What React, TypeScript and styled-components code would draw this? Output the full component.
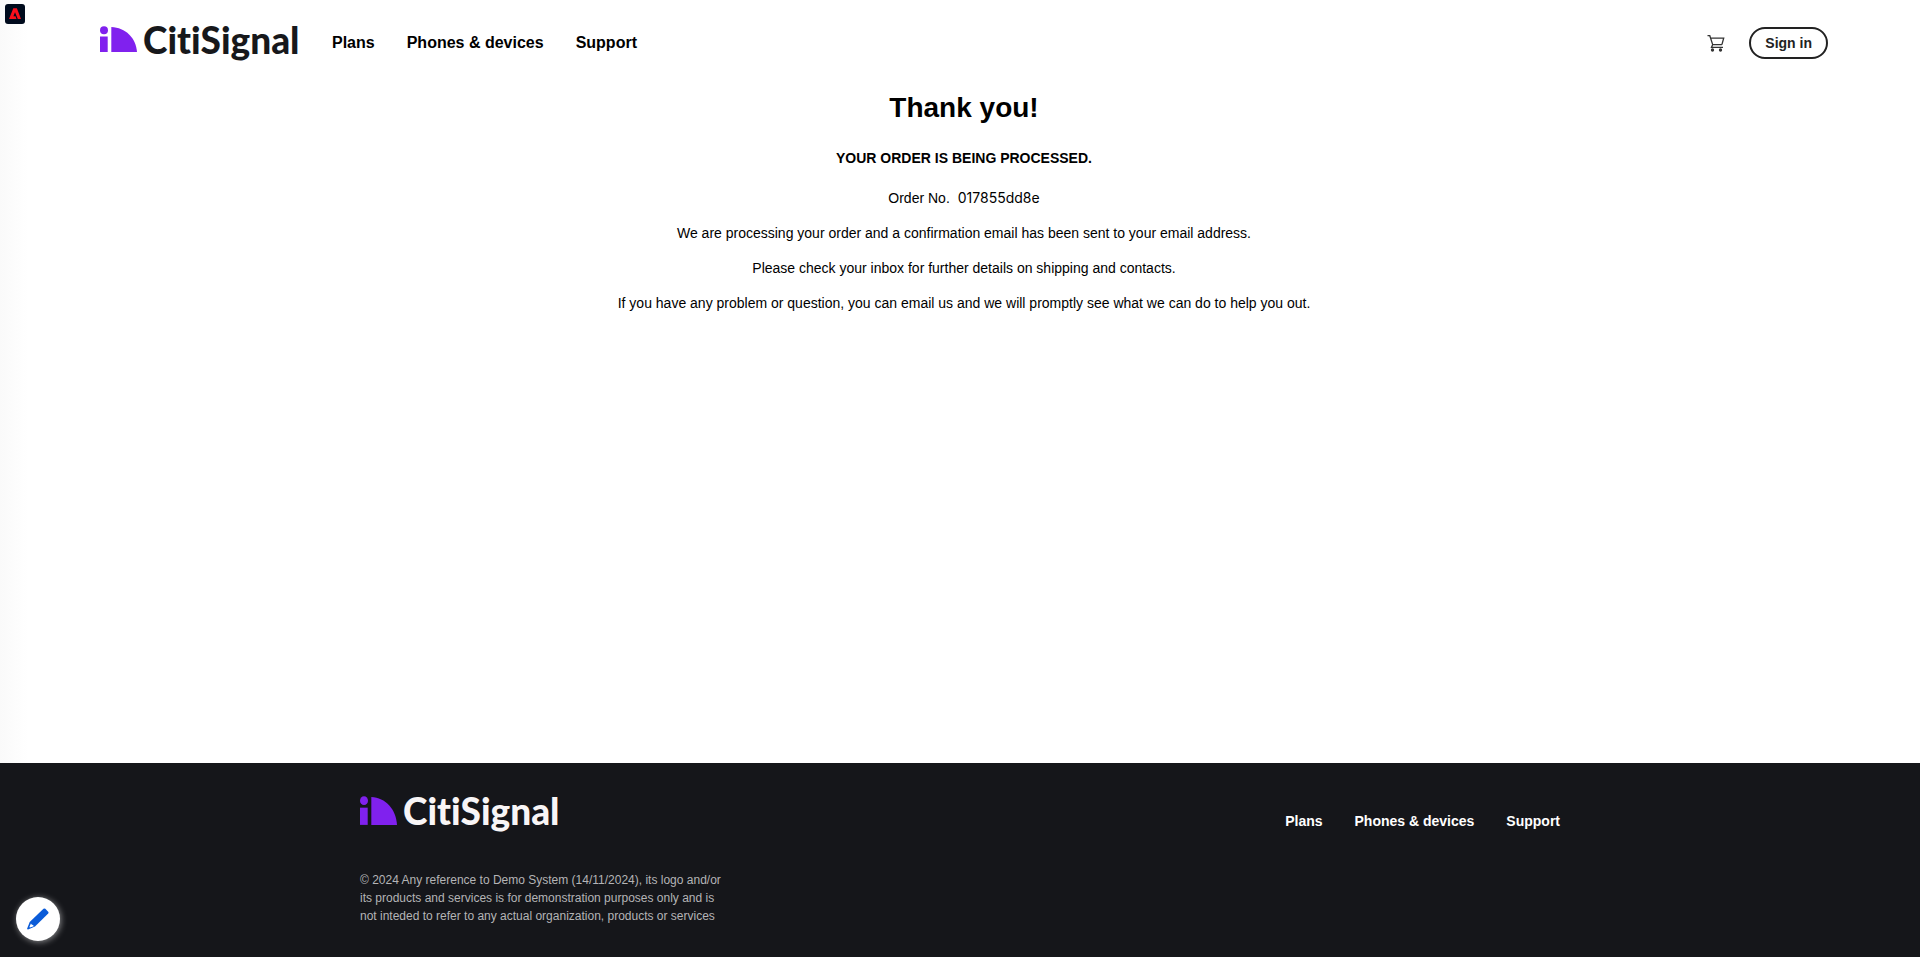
import React from "react";
import styled, { createGlobalStyle } from "styled-components";

const GlobalStyle = createGlobalStyle`
  *, *::before, *::after { box-sizing: border-box; }
  body {
    margin: 0;
    background: #fff;
    color: #000;
    font-family: "Liberation Sans", Arial, Helvetica, sans-serif;
  }
`;

const Page = styled.div`
  display: flex;
  flex-direction: column;
  min-height: 100vh;
  background: linear-gradient(to right, #fafafa, #fff 28px);
`;

const Header = styled.header`
  display: flex;
  align-items: center;
  justify-content: space-between;
  padding: 20px 92px 20px 100px;
`;

const HeaderGroup = styled.div<{ $gap: number }>`
  display: flex;
  align-items: center;
  gap: ${({ $gap }) => $gap}px;
`;

const LogoLink = styled.a<{ $color: string }>`
  display: flex;
  align-items: flex-start;
  gap: 6px;
  width: 200px;
  height: 46px;
  color: ${({ $color }) => $color};
  text-decoration: none;
`;

const LogoMark = styled.svg<{ $tall?: boolean }>`
  flex: none;
  width: 37px;
  height: ${({ $tall }) => ($tall ? 30 : 27)}px;
  margin-top: ${({ $tall }) => ($tall ? 5 : 6)}px;
`;

const LogoName = styled.span`
  font-family: Lato, "Open Sans", sans-serif;
  font-size: 37px;
  font-weight: 900;
  line-height: 40px;
  font-variant-ligatures: none;
`;

const NavList = styled.ul`
  display: flex;
  gap: 32px;
  margin: 0;
  padding: 0;
  list-style: none;
`;

const NavLink = styled.a<{ $size: number; $color: string }>`
  color: ${({ $color }) => $color};
  font-size: ${({ $size }) => $size}px;
  font-weight: 700;
  line-height: 24px;
  text-decoration: none;
`;

const CartButton = styled.button`
  display: flex;
  padding: 0;
  border: 0;
  background: none;
  color: #222;
  cursor: pointer;
`;

const SignInButton = styled.button`
  height: 32px;
  padding: 0 14px;
  border: 2px solid #222;
  border-radius: 16px;
  background: #fff;
  color: #222;
  font: 700 14px/20px "Liberation Sans", Arial, sans-serif;
  cursor: pointer;
`;

const Main = styled.main`
  flex: 1;
  padding: 4px 24px 40px 32px;
  text-align: center;
`;

const Title = styled.h1`
  margin: 0 0 22px;
  font-size: 28px;
  line-height: 36px;
`;

const Status = styled.h2`
  margin: 0 0 20px;
  font-size: 14px;
  line-height: 20px;
  text-transform: uppercase;
`;

const Paragraph = styled.p`
  margin: 0 0 15px;
  font-size: 14px;
  line-height: 20px;
`;

const OrderNumber = styled.span`
  margin-left: 8px;
  font-family: Inter, "Open Sans", sans-serif;
`;

const Footer = styled.footer`
  background: #15161a;
`;

const FooterInner = styled.div`
  display: flex;
  justify-content: space-between;
  max-width: 1200px;
  margin: 0 auto;
  padding: 28px 0 32px;
`;

const FooterNav = styled.nav`
  padding-top: 18px;
`;

const Legal = styled.p`
  width: 370px;
  margin: 34px 0 0;
  color: #b4b4b6;
  font-size: 12px;
  line-height: 18px;
`;

const AppBadge = styled.svg`
  position: absolute;
  top: 4px;
  left: 5px;
  width: 20px;
  height: 20px;
`;

const EditButton = styled.button`
  position: fixed;
  bottom: 16px;
  left: 16px;
  display: flex;
  align-items: center;
  justify-content: center;
  width: 44px;
  height: 44px;
  padding: 0;
  border: 0;
  border-radius: 50%;
  background: #fff;
  box-shadow: 1px 1px 6px rgba(255, 255, 255, 0.5);
  cursor: pointer;
`;

const links = ["Plans", "Phones & devices", "Support"];

function Logo({ color, tall }: { color: string; tall?: boolean }) {
  return (
    <LogoLink href="#" $color={color}>
      <LogoMark $tall={tall} viewBox="0 0 37 27" preserveAspectRatio="none" fill="#8021ee" aria-hidden="true">
        <ellipse cx="4" cy="4.200" rx="4" ry="4" />
        <path d="M0 10.500h7.700V26H0z" />
        <path d="M11.300 1C25.500 1.500 36 12 37 26H11.300z" />
      </LogoMark>
      <LogoName>CitiSignal</LogoName>
    </LogoLink>
  );
}

function Links({ size, color }: { size: number; color: string }) {
  return (
    <NavList>
      {links.map((label) => (
        <li key={label}>
          <NavLink href="#" $size={size} $color={color}>
            {label}
          </NavLink>
        </li>
      ))}
    </NavList>
  );
}

export default function App() {
  return (
    <Page>
      <GlobalStyle />
      <AppBadge viewBox="0 0 20 20" aria-hidden="true">
        <rect width="20" height="20" rx="3" fill="#000b1d" />
        <path d="M8.300 4.300h3.600L16 15h-3.200L10 8.200 8.400 12.200h2.100l1 2.800H4z" fill="#fa0f1b" />
      </AppBadge>
      <Header>
        <HeaderGroup $gap={32}>
          <Logo color="#17181b" />
          <nav aria-label="Main">
            <Links size={16} color="#000" />
          </nav>
        </HeaderGroup>
        <HeaderGroup $gap={24}>
          <CartButton type="button" aria-label="Cart">
            <svg width="18" height="18" viewBox="0 0 18 18" fill="none" stroke="#333" strokeWidth="1.300">
              <path d="M.5 1.700h2.300L5.700 10.600h9.200M3.700 4.200h13L14.900 10.600 M5.700 10.600l-1.200 2.800h11.500" />
              <circle cx="5.500" cy="16" r="1" fill="#333" />
              <circle cx="13.500" cy="16" r="1" fill="#333" />
            </svg>
          </CartButton>
          <SignInButton type="button">Sign in</SignInButton>
        </HeaderGroup>
      </Header>
      <Main>
        <Title>Thank you!</Title>
        <Status>Your order is being processed.</Status>
        <Paragraph>
          Order No.<OrderNumber>017855dd8e</OrderNumber>
        </Paragraph>
        <Paragraph>We are processing your order and a confirmation email has been sent to your email address.</Paragraph>
        <Paragraph>Please check your inbox for further details on shipping and contacts.</Paragraph>
        <Paragraph>
          If you have any problem or question, you can email us and we will promptly see what we can do to help you out.
        </Paragraph>
      </Main>
      <Footer>
        <FooterInner>
          <div>
            <Logo color="#f8f5f6" tall />
            <Legal>
              © 2024 Any reference to Demo System (14/11/2024), its logo and/or its products and services is for
              demonstration purposes only and is not inteded to refer to any actual organization, products or services
            </Legal>
          </div>
          <FooterNav aria-label="Footer">
            <Links size={14} color="#fff" />
          </FooterNav>
        </FooterInner>
      </Footer>
      <EditButton type="button" aria-label="Edit page">
        <svg width="22" height="22" viewBox="0 0 22 22" aria-hidden="true">
          <path fill="#0a5bd8" d="M16.500.8q.9-.8 1.800 0l2.900 2.900q.8.9 0 1.700L8 18.500 1 21.500 0 21l2.700-7z" />
          <path fill="#fff" d="M3.900 15.500l1 1.200 1.200.2.600 1.300-3.700 1.300-.6-.6z" />
        </svg>
      </EditButton>
    </Page>
  );
}
